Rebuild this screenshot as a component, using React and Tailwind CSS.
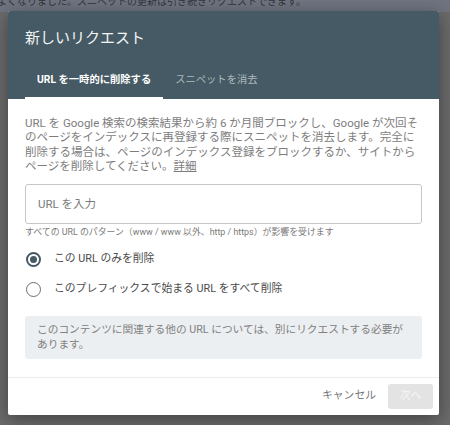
import React, { useState } from "react";

const font = { fontFamily: "Roboto, 'Noto Sans CJK JP', sans-serif" };

function Radio({ checked, label, onClick }) {
  return (
    <div className="flex items-center h-[30px] cursor-pointer" onClick={onClick}>
      <div
        className={
          checked
            ? "ml-[1px] w-[15px] h-[15px] rounded-full border-2 border-[#455a64] flex items-center justify-center"
            : "ml-[1px] w-[15px] h-[15px] rounded-full border-[1.5px] border-[#6e6e6e]"
        }
      >
        {checked && <div className="w-[7px] h-[7px] rounded-full bg-[#455a64]" />}
      </div>
      <span className="ml-[13px] text-[10.8px] text-[#4a4a4a] whitespace-nowrap">{label}</span>
    </div>
  );
}

function App() {
  const [mode, setMode] = useState("url");
  const [tab, setTab] = useState(0);

  return (
    <div className="relative w-[450px] h-[425px] bg-[#6b6b6b] overflow-hidden" style={font}>
      <div className="h-[12px] bg-[#6f7480] overflow-hidden">
        <div className="-mt-[5px] -ml-[3px] text-[10px] leading-[14px] text-[#30343b] whitespace-nowrap">
          よくなりました。スニペットの更新は引き続きリクエストできます。
        </div>
      </div>

      {/* modal */}
      <div className="absolute left-[8px] top-[11px] w-[431px] h-[404px] bg-white rounded-[2px] shadow-[0_4px_18px_rgba(0,0,0,0.4)] flex flex-col overflow-hidden">
        <div className="h-[88px] bg-[#455a64] px-[17px] flex flex-col justify-between">
          <div className="pt-[17px] text-[15px] leading-[20px] text-[#f2f4f5]">新しいリクエスト</div>
          <div className="flex">
            <div
              onClick={() => setTab(0)}
              className={
                tab === 0
                  ? "h-[36px] px-[12px] flex items-center border-b-2 border-white text-[10.3px] font-bold text-white"
                  : "h-[36px] px-[12px] flex items-center border-b-2 border-transparent text-[10.3px] text-[#aeb9be]"
              }
            >
              URL を一時的に削除する
            </div>
            <div
              onClick={() => setTab(1)}
              className={
                tab === 1
                  ? "h-[36px] px-[12px] flex items-center border-b-2 border-white text-[10.3px] font-bold text-white"
                  : "h-[36px] px-[12px] flex items-center border-b-2 border-transparent text-[10.3px] text-[#aeb9be]"
              }
            >
              スニペットを消去
            </div>
          </div>
        </div>

        <div className="flex-1 px-[17px] pt-[17px]">
          <p className="text-[11.5px] leading-[14.3px] text-[#7d7d7d] whitespace-nowrap">
            URL を Google 検索の検索結果から約 6 か月間ブロックし、Google が次回そ
            <br />
            のページをインデックスに再登録する際にスニペットを消去します。完全に
            <br />
            削除する場合は、ページのインデックス登録をブロックするか、サイトから
            <br />
            ページを削除してください。<span className="underline">詳細</span>
          </p>

          <div className="mt-[11px] h-[40px] border border-[#c6c6c6] rounded-[3px] flex items-center pl-[12px]">
            <input
              placeholder="URL を入力"
              className="w-full outline-none text-[11.5px] text-[#333] placeholder:text-[#7a7a7a] bg-transparent"
              style={font}
            />
          </div>
          <div className="mt-[2px] text-[8.9px] leading-[12px] text-[#7a7a7a] whitespace-nowrap">
            すべての URL のパターン（www / www 以外、http / https）が影響を受けます
          </div>

          <div className="mt-[6px]">
            <Radio checked={mode === "url"} label="この URL のみを削除" onClick={() => setMode("url")} />
            <Radio
              checked={mode === "prefix"}
              label="このプレフィックスで始まる URL をすべて削除"
              onClick={() => setMode("prefix")}
            />
          </div>

          <div className="mt-[12px] bg-[#eceff1] rounded-[3px] px-[12px] py-[6px] text-[10.7px] leading-[15.3px] text-[#808080] whitespace-nowrap">
            このコンテンツに関連する他の URL については、別にリクエストする必要が
            <br />
            あります。
          </div>
        </div>

        <div className="h-[38px] border-t border-[#ececec] flex items-center justify-end pr-[6px]">
          <button className="text-[10.8px] text-[#767676] mr-[12px]" style={font}>
            キャンセル
          </button>
          <button
            disabled
            className="w-[45px] h-[25px] rounded-[3px] bg-[#e3e3e3] text-[10.8px] text-[#f7f7f7]"
            style={font}
          >
            次へ
          </button>
        </div>
      </div>
    </div>
  );
}

export default App;
